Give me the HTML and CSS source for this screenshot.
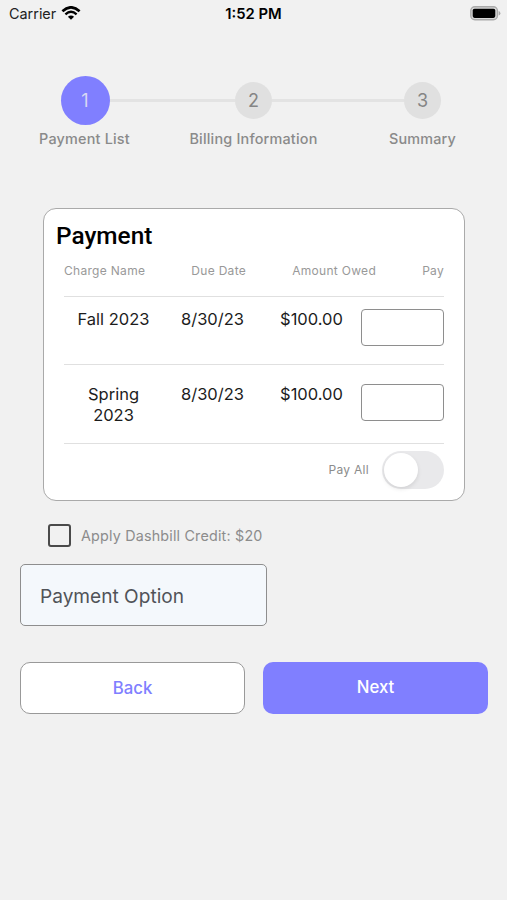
FILE: index.html
```html
<!DOCTYPE html>
<html lang="en">
  <head>
    <meta charset="UTF-8" />
    <meta name="viewport" content="width=device-width, initial-scale=1.0" />
    <title>Payment</title>
    <link rel="stylesheet" href="styles.css">
  </head>
  <body>
    <div class="status-bar">
      <div class="carrier">
        <span>Carrier</span>
        <svg class="wifi" width="20" height="14" viewBox="0 0 20 14">
          <path d="M1.4 5.2 Q10 -2.6 18.6 5.2" fill="none" stroke="#000" stroke-width="2.6" />
          <path d="M4.4 8.3 Q10 3.4 15.6 8.3" fill="none" stroke="#000" stroke-width="2.4" />
          <path d="M10 13.8 L6.9 10.7 Q10 8.2 13.1 10.7 Z" />
        </svg>
      </div>
      <div class="time">1:52 PM</div>
      <div class="battery">
        <svg width="31" height="15" viewBox="0 0 31 15">
          <rect x="0.8" y="0.8" width="26.6" height="13" rx="4" fill="#d9d9d9" stroke="#aaa" stroke-width="1.4" />
          <rect x="2.7" y="2.7" width="22.6" height="9.2" rx="1.8" />
          <path d="M28.6 5 Q30.4 5.5 30.4 7.3 Q30.4 9.1 28.6 9.6 Z" fill="#aaa" />
        </svg>
      </div>
    </div>

    <div class="steps">
      <div class="step active">
        <div class="step-head"><span class="circle">1</span></div>
        <div class="label">Payment List</div>
      </div>
      <div class="step">
        <div class="step-head"><span class="circle">2</span></div>
        <div class="label">Billing Information</div>
      </div>
      <div class="step">
        <div class="step-head"><span class="circle">3</span></div>
        <div class="label">Summary</div>
      </div>
    </div>

    <div class="card">
      <h1>Payment</h1>
      <div class="table-head">
        <span>Charge Name</span>
        <span>Due Date</span>
        <span>Amount Owed</span>
        <span>Pay</span>
      </div>
      <div class="row">
        <span>Fall 2023</span>
        <span>8/30/23</span>
        <span>$100.00</span>
        <input type="text" />
      </div>
      <div class="row tall">
        <span>Spring 2023</span>
        <span>8/30/23</span>
        <span>$100.00</span>
        <input type="text" />
      </div>
      <div class="pay-all">
        <span>Pay All</span>
        <div class="switch"><div class="knob"></div></div>
      </div>
    </div>

    <div class="credit">
      <div class="checkbox"></div>
      <span>Apply Dashbill Credit: $20</span>
    </div>

    <div class="option">Payment Option</div>

    <div class="buttons">
      <button class="back">Back</button>
      <button class="next">Next</button>
    </div>
  </body>
</html>
```

FILE: styles.css
```css
* {
  box-sizing: border-box;
}
body {
  margin: 0;
  min-height: 900px;
  background: #f1f1f1;
  font-family: Inter, "Liberation Sans", sans-serif;
}

.status-bar {
  display: grid;
  grid-template-columns: 1fr 1fr 1fr;
  align-items: center;
  height: 27px;
  padding: 0 6px 0 9px;
  font-size: 14.4px;
}
.carrier {
  display: flex;
  align-items: center;
  gap: 5px;
  color: #222;
}
.wifi {
  margin-bottom: 2px;
}
.time {
  margin-left: -3px;
  text-align: center;
  font-size: 14.8px;
  font-weight: 600;
}
.battery {
  display: flex;
  justify-content: flex-end;
}

.steps {
  display: flex;
  padding-top: 49px;
}
.step {
  flex: 1;
  text-align: center;
}
.step-head {
  display: flex;
  align-items: center;
  height: 49px;
}
.step-head::before,
.step-head::after {
  content: "";
  flex: 1;
  height: 3px;
  background: #e3e3e3;
}
.step:first-child .step-head::before,
.step:last-child .step-head::after {
  background: none;
}
.circle {
  width: 37px;
  height: 37px;
  line-height: 37px;
  border-radius: 50%;
  background: #e0e0e0;
  color: #858585;
  font-size: 18px;
}
.active .circle {
  width: 49px;
  height: 49px;
  line-height: 49px;
  margin-left: 1px;
  background: #807fff;
  color: #d8d8f4;
}
.label {
  margin-top: 4px;
  line-height: 20px;
  font-size: 14.4px;
  font-weight: 500;
  letter-spacing: 0.2px;
  color: #8a8a8a;
}

.card {
  width: 422px;
  height: 293px;
  margin: 59px 0 0 43px;
  padding: 0 20px;
  border: 1px solid #aaa;
  border-radius: 13px;
  background: #fff;
}
h1 {
  margin: 12px 0 0 -8px;
  line-height: 30px;
  font-family: Roboto, sans-serif;
  font-size: 24.4px;
  font-weight: 500;
}
.table-head {
  display: flex;
  justify-content: space-between;
  height: 46px;
  padding-top: 11px;
  border-bottom: 1px solid #e0e0e0;
  font-size: 12px;
  line-height: 18px;
  letter-spacing: 0.3px;
  color: #999;
}
.row {
  display: grid;
  grid-template-columns: 99px 99px 99px 83px;
  align-items: start;
  height: 68px;
  padding-top: 12px;
  border-bottom: 1px solid #e0e0e0;
  font-size: 16.5px;
  line-height: 21px;
  text-align: center;
  color: #1c1c1c;
}
.row span {
  padding: 0 8px;
}
.row input {
  width: 83px;
  height: 37px;
  border: 1px solid #8e8e8e;
  border-radius: 4px;
}
.tall {
  height: 79px;
  padding-top: 19px;
}
.pay-all {
  display: flex;
  justify-content: flex-end;
  align-items: center;
  gap: 13px;
  height: 51px;
  font-size: 12px;
  letter-spacing: 0.3px;
  color: #8c8c8c;
}
.switch {
  width: 62px;
  height: 38px;
  padding: 2px;
  border-radius: 19px;
  background: #e9e9eb;
}
.knob {
  width: 34px;
  height: 34px;
  border-radius: 50%;
  background: #fff;
  box-shadow: 0 2px 4px rgba(0, 0, 0, 0.1);
}

.credit {
  display: flex;
  align-items: center;
  gap: 10px;
  margin: 23px 0 0 48px;
  font-size: 14.3px;
  letter-spacing: 0.2px;
  color: #8c8c8c;
}
.checkbox {
  width: 23px;
  height: 23px;
  border: 2px solid #4a4a4a;
  border-radius: 3px;
}
.option {
  width: 247px;
  height: 62px;
  margin: 17px 0 0 20px;
  padding-left: 19px;
  border: 1px solid #8e8e8e;
  border-radius: 5px;
  background: #f4f8fc;
  font-size: 19.1px;
  line-height: 63px;
  color: #505358;
}
.buttons {
  display: grid;
  grid-template-columns: 1fr 1fr;
  gap: 18px;
  margin: 36px 19px 0 20px;
}
.buttons button {
  height: 52px;
  padding: 0;
  border: 0;
  border-radius: 10px;
  font-family: inherit;
  font-size: 16.8px;
  font-weight: 500;
}
.buttons .back {
  border: 1px solid #999;
  background: #fff;
  color: #807fff;
}
.buttons .next {
  padding-bottom: 3px;
  background: #807fff;
  color: #fff;
}
```
